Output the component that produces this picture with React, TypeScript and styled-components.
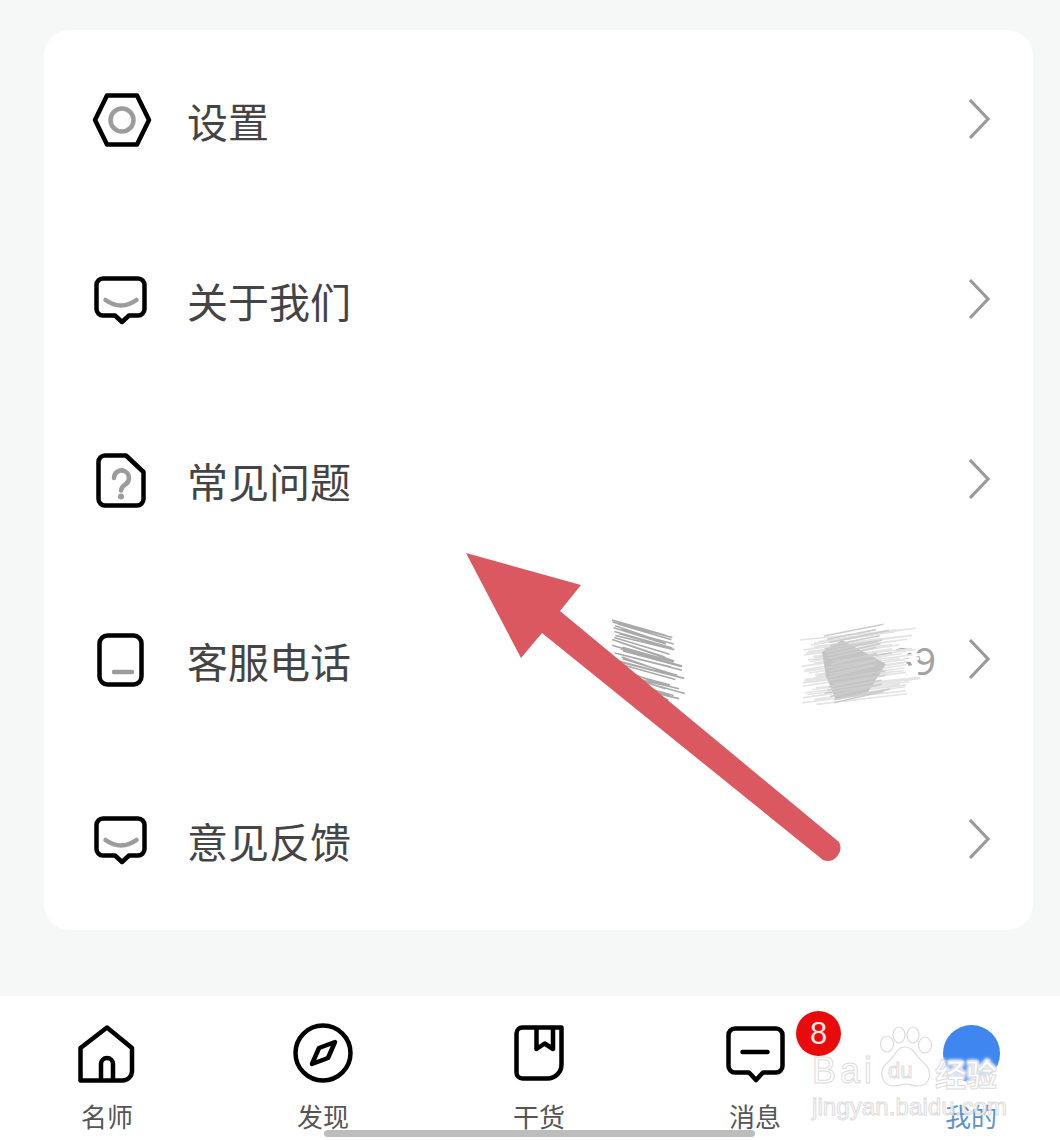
import React from "react";
import styled, { createGlobalStyle } from "styled-components";

const GlobalStyle = createGlobalStyle`
  html, body {
    margin: 0;
    padding: 0;
    background: #f6f7f7;
  }
`;

const Page = styled.div`
  position: relative;
  width: 1060px;
  height: 1140px;
  overflow: hidden;
  display: flex;
  flex-direction: column;
  background: #f6f7f7;
  font-family: "Noto Sans CJK SC", "Noto Sans", sans-serif;
`;

const Main = styled.main`
  flex: 1;
  padding: 30px 27px 0 44px;
`;

const Card = styled.section`
  display: flex;
  flex-direction: column;
  background: #fff;
  border-radius: 26px;
`;

const Row = styled.div`
  height: 180px;
  display: flex;
  align-items: center;
  padding: 0 42px 0 46px;
`;

const RowIcon = styled.svg`
  width: 64px;
  height: 64px;
  flex: none;
  margin-right: 33px;
`;

const RowLabel = styled.span`
  font-size: 41px;
  line-height: 50px;
  color: #444;
  flex: 1;
`;

const RowValue = styled.span`
  font-family: "Noto Sans", sans-serif;
  font-size: 38px;
  line-height: 50px;
  color: #a2a2a2;
  margin-right: 31px;
`;

const Chevron = styled.svg`
  width: 24px;
  height: 42px;
  flex: none;
  margin-top: -2px;
`;

const TabBar = styled.nav`
  height: 144px;
  flex: none;
  background: #fff;
  display: grid;
  grid-template-columns: repeat(5, 216px);
  margin-right: -40px;
  padding-left: 0;
  transform: translateX(-1px);
`;

const Tab = styled.div`
  position: relative;
  display: flex;
  flex-direction: column;
  align-items: center;
  padding-top: 26px;
`;

const TabIcon = styled.svg`
  width: 64px;
  height: 64px;
`;

const TabLabel = styled.span<{ $active?: boolean }>`
  margin-top: 15px;
  font-size: 26px;
  line-height: 30px;
  color: ${(p) => (p.$active ? "#5b93c9" : "#555")};
`;

const Badge = styled.span`
  position: absolute;
  top: 15px;
  left: 149px;
  width: 45px;
  height: 45px;
  border-radius: 50%;
  background: #e90b0b;
  color: #ffe9e9;
  font-family: "Liberation Sans", sans-serif;
  font-size: 31px;
  line-height: 45px;
  text-align: center;
`;

const Avatar = styled.span`
  width: 57px;
  height: 57px;
  margin: 3px 0 4px;
  border-radius: 50%;
  background: #3f86f0;
`;

const HomeBar = styled.div`
  position: absolute;
  left: 324px;
  top: 1130px;
  width: 431px;
  height: 7px;
  border-radius: 4px;
  background: #bdbdbd;
`;

const Overlay = styled.svg`
  position: absolute;
  inset: 0;
  width: 1060px;
  height: 1140px;
  pointer-events: none;
`;

const Watermark = styled.div`
  position: absolute;
  left: 812px;
  top: 1026px;
  width: 192px;
  display: flex;
  flex-direction: column;
  pointer-events: none;
  -webkit-text-stroke: 1px #dcdcdc;
  color: rgba(255, 255, 255, 0.75);
`;

const MarkTop = styled.div`
  display: flex;
  align-items: flex-end;
  height: 62px;
`;

const MarkBai = styled.span`
  font-family: "Liberation Sans", sans-serif;
  font-size: 36px;
  line-height: 36px;
  letter-spacing: 4px;
  width: 63px;
  margin-bottom: -1px;
`;

const MarkPaw = styled.div`
  position: relative;
  width: 60px;
  height: 62px;
`;

const PawIcon = styled.svg`
  width: 60px;
  height: 62px;
`;

const MarkDu = styled.span`
  position: absolute;
  left: 13px;
  bottom: 5px;
  font-family: "Liberation Sans", sans-serif;
  font-size: 22px;
  line-height: 24px;
`;

const MarkCn = styled.span`
  font-size: 31px;
  line-height: 34px;
  font-weight: 700;
  white-space: nowrap;
  color: #fff;
  margin-bottom: -2px;
  text-shadow: 0 0 4px #fff, 0 0 4px #fff, 0 0 3px #fff;
`;

const MarkUrl = styled.span`
  margin-top: 5px;
  font-family: "Liberation Sans", sans-serif;
  font-size: 24px;
  line-height: 28px;
  letter-spacing: 0.1px;
  white-space: nowrap;
`;

const ink = { fill: "none", stroke: "#000", strokeWidth: 4.5, strokeLinejoin: "round", strokeLinecap: "round" } as const;
const soft = { fill: "none", stroke: "#9c9c9c", strokeWidth: 4.5, strokeLinecap: "round" } as const;

const bubble =
  "M13 10.5H48a6.5 6.5 0 0 1 6.5 6.5V41a6.5 6.5 0 0 1-6.5 6.5H39L32 54L25 47.5H13A6.5 6.5 0 0 1 6.5 41V17A6.5 6.5 0 0 1 13 10.5Z";

const SmileBubble = () => (
  <>
    <path d={bubble} {...ink} />
    <path d="M15.5 32Q31 43 46.5 32" {...soft} />
  </>
);

const rows = [
  {
    label: "设置",
    icon: (
      <>
        <path d="M17 7.5H47L59 32L47 56.5H17L5 32Z" {...ink} />
        <circle cx="32" cy="32" r="11.5" {...soft} />
      </>
    ),
  },
  { label: "关于我们", icon: <SmileBubble /> },
  {
    label: "常见问题",
    icon: (
      <>
        <path d="M15 7.5H36L53.5 24V51A6.5 6.5 0 0 1 47 57.5H15A6.5 6.5 0 0 1 8.5 51V14A6.5 6.5 0 0 1 15 7.5Z" {...ink} />
        <path d="M24 30a7.5 7.5 0 1 1 11.5 6.3c-2.8 1.8-4.5 3.2-4.5 6.2" {...soft} />
        <circle cx="31" cy="48.5" r="3" fill="#9c9c9c" />
      </>
    ),
  },
  {
    label: "客服电话",
    value: "39",
    icon: (
      <>
        <rect x="9.5" y="7.5" width="42" height="49" rx="8" {...ink} />
        <path d="M24 44H42" {...soft} />
      </>
    ),
  },
  { label: "意见反馈", icon: <SmileBubble /> },
];

const tabs = [
  {
    label: "名师",
    icon: (
      <>
        <path d="M32 5.5L57 26V49A9.5 9.5 0 0 1 47.5 58.5H5.5V26Z" {...ink} />
        <path d="M26 58V42a6 6 0 0 1 12 0V58" {...ink} />
      </>
    ),
  },
  {
    label: "发现",
    icon: (
      <>
        <circle cx="32" cy="31" r="27.5" {...ink} />
        <path d="M21 42L28 26L44 20L37 36Z" {...ink} />
      </>
    ),
  },
  {
    label: "干货",
    icon: (
      <>
        <path d="M15.5 5.5H54.5V42.5A14 14 0 0 1 40.5 56.5H15.5A6 6 0 0 1 9.5 50.5V11.5A6 6 0 0 1 15.5 5.5Z" {...ink} />
        <path d="M29.5 6V27L37.7 21.5L46 27V6" {...ink} />
      </>
    ),
  },
  {
    label: "消息",
    badge: "8",
    icon: (
      <>
        <path d="M12 6.5H53a6.5 6.5 0 0 1 6.5 6.5V44a6.5 6.5 0 0 1-6.5 6.5H40L33 58L26 50.5H12A6.5 6.5 0 0 1 5.5 44V13A6.5 6.5 0 0 1 12 6.5Z" {...ink} />
        <path d="M19.5 30H44.5" {...ink} />
      </>
    ),
  },
];

// pencil marks over the phone number, seeded so every render is the same
const scribble = (x0: number, y0: number, w: number, h: number, slant: number, count: number, seed: number) => {
  let s = seed;
  const rnd = () => {
    s = (s * 16807) % 2147483647;
    return s / 2147483647;
  };
  let d = "";
  for (let i = 0; i < count; i++) {
    const y = y0 + (h * i) / count;
    const inset = rnd() * w * 0.18;
    const len = w * (0.75 + rnd() * 0.25);
    d += `M${(x0 + inset).toFixed(1)} ${y.toFixed(1)}L${(x0 + inset + len).toFixed(1)} ${(y + slant + rnd() * 4).toFixed(1)}`;
  }
  return d;
};

const App = () => (
  <Page>
    <GlobalStyle />
    <Main>
      <Card>
        {rows.map((r) => (
          <Row key={r.label}>
            <RowIcon viewBox="0 0 64 64">{r.icon}</RowIcon>
            <RowLabel>{r.label}</RowLabel>
            {r.value && <RowValue>{r.value}</RowValue>}
            <Chevron viewBox="0 0 24 42">
              <path d="M3 2L21 21L3 40" fill="none" stroke="#9a9a9a" strokeWidth="3.2" />
            </Chevron>
          </Row>
        ))}
      </Card>
    </Main>
    <TabBar>
      {tabs.map((t) => (
        <Tab key={t.label}>
          <TabIcon viewBox="0 0 64 64">{t.icon}</TabIcon>
          {t.badge && <Badge>{t.badge}</Badge>}
          <TabLabel>{t.label}</TabLabel>
        </Tab>
      ))}
      <Tab>
        <Avatar />
        <TabLabel $active>我的</TabLabel>
      </Tab>
    </TabBar>
    <HomeBar />
    <Overlay viewBox="0 0 1060 1140">
      <path d={scribble(612, 620, 62, 66, 14, 34, 11)} stroke="#a9a9a9" strokeWidth="1.6" fill="none" />
      <path d={scribble(830, 618, 85, 90, -16, 34, 23)} stroke="#ffffff" strokeWidth="3" fill="none" />
      <path d={scribble(800, 640, 105, 66, -14, 40, 37)} stroke="#e4e4e4" strokeWidth="1.6" fill="none" />
      <path d="M822 652L842 640L886 664L868 692L836 700L826 676Z" fill="#c4c4c4" />
      <path d={scribble(824, 636, 60, 70, -12, 22, 53)} stroke="#cdcdcd" strokeWidth="1.6" fill="none" />
      <path d="M466 553L581 585L560 611L839 842A13 13 0 0 1 823 860L542 633L521 658Z" fill="#db5860" />
    </Overlay>
    <Watermark>
      <MarkTop>
        <MarkBai>Bai</MarkBai>
        <MarkPaw>
          <PawIcon viewBox="0 0 60 62">
            <g fill="rgba(255,255,255,.6)" stroke="#dcdcdc" strokeWidth="1.2">
              <ellipse cx="12" cy="18" rx="6.5" ry="8" />
              <ellipse cx="24" cy="9" rx="6" ry="8" />
              <ellipse cx="38" cy="9" rx="6" ry="8" />
              <ellipse cx="50" cy="19" rx="6.5" ry="8" />
              <path d="M30 21C21 21 20 31 12 37C3 44 6 60 19 60C25 60 27 58 31 58C35 58 37 60 43 60C56 60 58 45 49 37C41 31 39 21 30 21Z" />
            </g>
          </PawIcon>
          <MarkDu>du</MarkDu>
        </MarkPaw>
        <MarkCn>经验</MarkCn>
      </MarkTop>
      <MarkUrl>jingyan.baidu.com</MarkUrl>
    </Watermark>
  </Page>
);

export default App;
